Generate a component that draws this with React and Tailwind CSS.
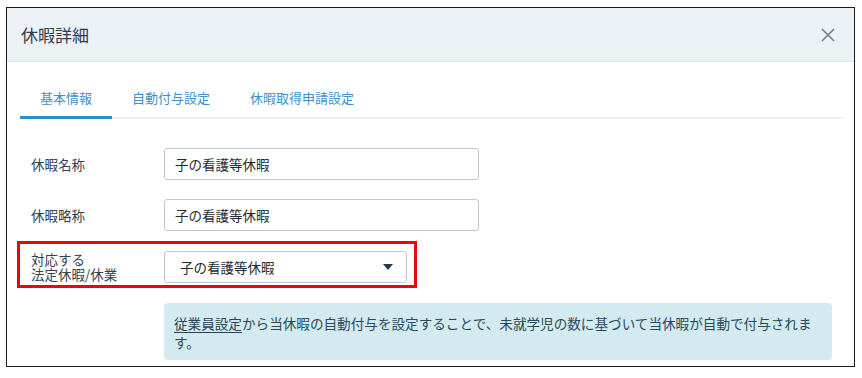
import React from "react";

const font = { fontFamily: '"Noto Sans CJK JP", "Noto Sans", sans-serif' };

export default function App() {
  return (
    <div className="w-[862px] h-[378px] bg-white relative" style={font}>
      <div className="absolute left-[6px] top-[7px] w-[849px] h-[360px] border border-[#1a1a1a] flex flex-col overflow-hidden">
        {/* header */}
        <div className="h-[54px] shrink-0 bg-[#ecf1f6] border-b border-[#dfe6ec] flex items-center justify-between pl-[14px] pr-[18px]">
          <span className="text-[17px] text-[#2c3e50] leading-none">休暇詳細</span>
          <svg width="16" height="16" viewBox="0 0 16 16" className="text-[#6f7f8e]">
            <path d="M2 2 L14 14 M14 2 L2 14" stroke="currentColor" strokeWidth="1.6" fill="none" />
          </svg>
        </div>
        {/* tabs */}
        <div className="ml-[13px] mr-[11px] mt-[26px] flex border-b-2 border-[#eef1f4]">
          <div className="px-[20px] pb-[8px] -mb-[2px] border-b-[3px] border-[#2a8fcb] text-[13px] leading-[20px] text-[#3d8fcb]">基本情報</div>
          <div className="px-[20px] pb-[8px] text-[13px] leading-[20px] text-[#3d8fcb]">自動付与設定</div>
          <div className="px-[20px] pb-[8px] text-[13px] leading-[20px] text-[#3d8fcb]">休暇取得申請設定</div>
        </div>
        {/* form */}
        <div className="flex flex-col pl-[24px] mt-[29px]">
          <div className="flex items-center h-[32px]">
            <div className="w-[133px] text-[13.5px] text-[#34424e]">休暇名称</div>
            <div className="w-[315px] h-[32px] border border-[#b9c9d6] rounded-[3px] flex items-center pl-[10px] text-[13.5px] text-[#1f2a33]">子の看護等休暇</div>
          </div>
          <div className="flex items-center h-[32px] mt-[19px]">
            <div className="w-[133px] text-[13.5px] text-[#34424e]">休暇略称</div>
            <div className="w-[315px] h-[32px] border border-[#b9c9d6] rounded-[3px] flex items-center pl-[10px] text-[13.5px] text-[#1f2a33]">子の看護等休暇</div>
          </div>
          <div className="relative flex items-center h-[32px] mt-[20px]">
            <div className="w-[133px] text-[13.5px] leading-[15px] text-[#34424e]">
              <div>対応する</div>
              <div>法定休暇/休業</div>
            </div>
            <div className="w-[243px] h-[32px] border border-[#b9c9d6] rounded-[3px] flex items-center justify-between pl-[15px] pr-[13px] text-[13.5px] text-[#1f2a33]">
              <span>子の看護等休暇</span>
              <svg width="10" height="6" viewBox="0 0 10 6">
                <path d="M0 0 L10 0 L5 6 Z" fill="#22384d" />
              </svg>
            </div>
            <div className="absolute left-[-14px] top-[-10px] w-[400px] h-[47px] border-[3px] border-[#e8070b] pointer-events-none" />
          </div>
          <div className="ml-[133px] mt-[20px] w-[668px] bg-[#d3ebf0] rounded-[4px] pl-[10px] pr-[10px] pt-[11px] pb-[8px] text-[13.6px] leading-[19px] text-[#2a4a5a]">
            <span className="underline underline-offset-[3px] text-[#2b4150]">従業員設定</span>から当休暇の自動付与を設定することで、未就学児の数に基づいて当休暇が自動で付与されます。
          </div>
        </div>
      </div>
    </div>
  );
}
